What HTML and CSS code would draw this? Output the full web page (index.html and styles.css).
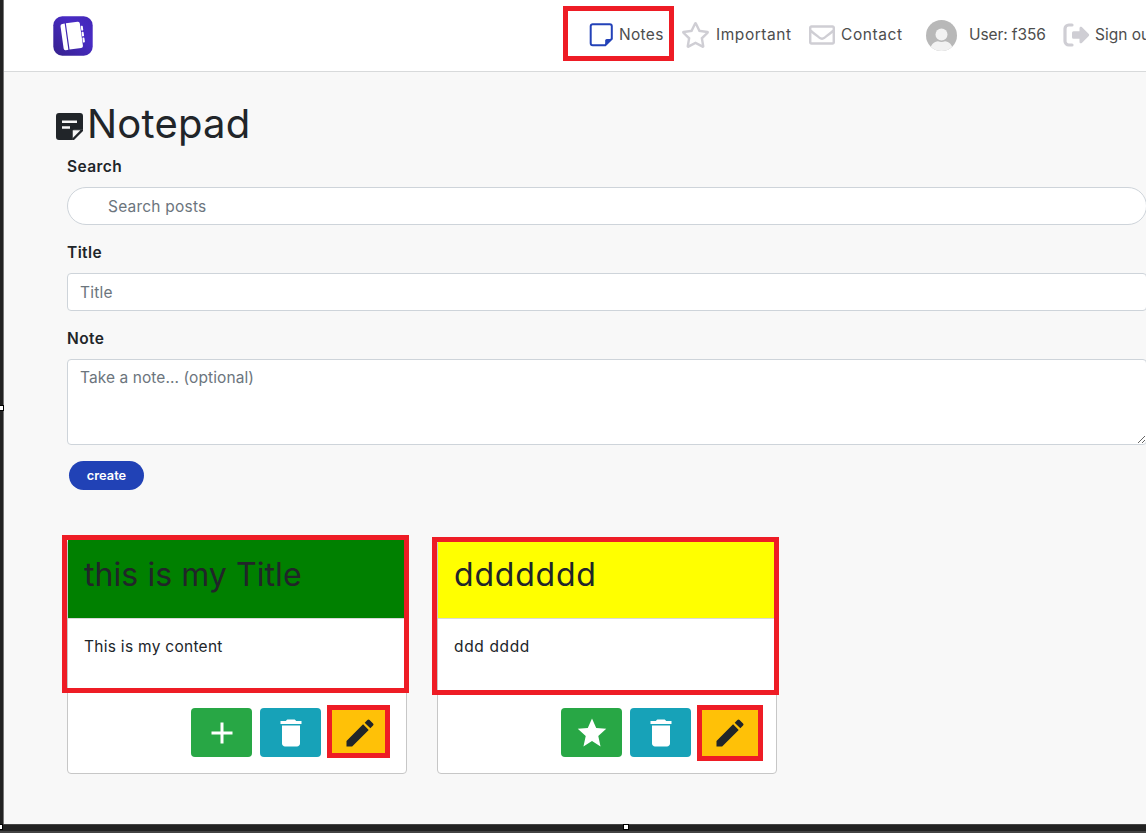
FILE: index.html
```html
<!DOCTYPE html>
<html lang="en">
<head>
<meta charset="utf-8">
<title>Notepad</title>
<link rel="stylesheet" href="styles.css">
</head>
<body>
<div class="window">
  <header class="topbar">
    <svg class="logo" viewBox="0 0 40 40">
      <defs><linearGradient id="lg" x1="0" y1="1" x2="1" y2="0"><stop offset="0" stop-color="#35218c"/><stop offset=".65" stop-color="#482bc4"/><stop offset="1" stop-color="#4327b7"/></linearGradient></defs>
      <rect x=".3" y=".3" width="39.400" height="39.400" rx="9" fill="url(#lg)"/>
      <g fill="#fff" transform="rotate(-8 20 20)">
        <path d="M11 6.500h2.500v26.500H11a2 2 0 0 1-2-2V8.500a2 2 0 0 1 2-2z"/>
        <path d="M14.700 6.500H26.500a2 2 0 0 1 2 2V31a2 2 0 0 1-2 2H14.700z"/>
        <rect x="29" y="11" width="2" height="5" rx=".8"/><rect x="29" y="17.200" width="2" height="4.600" rx=".8"/><rect x="29" y="23" width="2" height="5" rx=".8"/>
      </g>
    </svg>
    <nav class="nav">
      <a class="item notes"><svg width="24" height="24" viewBox="0 0 24 24"><path d="M3.700 1.200h17.100a2 2 0 0 1 2 2v12.600l-6.500 6.500H3.700a2 2 0 0 1-2-2V3.200a2 2 0 0 1 2-2z" fill="none" stroke="#2342b8" stroke-width="2"/><path d="M16.200 23v-5.500a1.500 1.500 0 0 1 1.500-1.500H23z" fill="#2342b8"/></svg><span class="label">Notes</span></a>
      <a class="item important"><svg width="29" height="26" viewBox="0 0 576 512"><path fill="#cfced4" d="M528.1 171.500L382 150.200 316.700 17.800c-11.700-23.600-45.600-23.900-57.400 0L194 150.200 47.900 171.500c-26.200 3.800-36.700 36.100-17.700 54.600l105.700 103-25 145.500c-4.500 26.300 23.200 46 46.400 33.700L288 439.600l130.700 68.700c23.200 12.200 50.900-7.400 46.400-33.700l-25-145.500 105.700-103c19-18.500 8.500-50.800-17.700-54.600zM388.600 312.300l23.700 138.400L288 385.400l-124.300 65.300 23.700-138.400-100.600-98 139-20.200 62.200-126 62.200 126 139 20.200-100.600 98z"/></svg><span class="label">Important</span></a>
      <a class="item contact"><svg width="26" height="26" viewBox="0 0 512 512"><path fill="#cfced4" d="M464 64H48C21.490 64 0 85.490 0 112v288c0 26.510 21.490 48 48 48h416c26.510 0 48-21.490 48-48V112c0-26.510-21.490-48-48-48zm0 48v40.805c-22.422 18.259-58.168 46.651-134.587 106.490-16.841 13.247-50.201 45.072-73.413 44.701-23.208.375-56.579-31.459-73.413-44.701C106.180 199.465 70.425 171.067 48 152.805V112h416zM48 400V214.398c22.914 18.251 55.409 43.862 104.938 82.646 21.857 17.205 60.134 55.186 103.062 54.955 42.717.231 80.509-37.199 103.053-54.947 49.528-38.783 82.032-64.401 104.947-82.653V400H48z"/></svg><span class="label">Contact</span></a>
      <a class="item user"><svg width="31" height="31" viewBox="0 0 31 31"><defs><clipPath id="av"><circle cx="15.500" cy="15.500" r="15.500"/></clipPath></defs><g clip-path="url(#av)"><path fill="#b8b8b8" d="M0 0h31v31H0z"/><circle cx="15.500" cy="14.500" r="6" fill="#f2f2f2"/><path d="M4 31c0-6 4.500-9.700 8-9.700q3.500 1.200 7 0c3.500 0 8 3.700 8 9.700z" fill="#f2f2f2"/></g></svg><span class="label">User: f356</span></a>
      <a class="item signout"><svg width="27" height="24" viewBox="0 0 27 24"><path d="M9 2H5.800A3.800 3.800 0 0 0 2 5.800v12.400A3.800 3.800 0 0 0 5.800 22H9" fill="none" stroke="#cfced4" stroke-width="3.200" stroke-linecap="round"/><path fill="#cfced4" d="M10.500 8.300h6V5.200c0-1.600 1.300-2 2.300-1.100l7 6.800q.9 1.100 0 2.200l-7 6.800c-1 .9-2.300.5-2.300-1.100v-3.100h-6a1.500 1.500 0 0 1-1.500-1.500V9.800a1.500 1.500 0 0 1 1.500-1.500z"/></svg><span class="label">Sign out</span></a>
    </nav>
  </header>
  <main class="content">
    <h1 class="heading"><svg width="27" height="27" viewBox="0 0 27 27"><path fill="#212529" d="M3 0h21a3 3 0 0 1 3 3v13.500h-9a1.500 1.500 0 0 0-1.500 1.500v9H3a3 3 0 0 1-3-3V3a3 3 0 0 1 3-3z"/><path d="M6 7.500h15v2.600H6zM6 13.200h8v2.600H6z" fill="#f8f8f8"/><path d="M16.200 16.200H27V18l-9 9h-1.800z" fill="#212529"/><path d="M16.800 17.200h7.600l-7.600 7.900z" fill="#f8f8f8"/></svg><span class="heading-text">Notepad</span></h1>
    <form class="form">
      <label class="caption">Search</label>
      <input class="field search" placeholder="Search posts">
      <label class="caption">Title</label>
      <input class="field" placeholder="Title">
      <label class="caption">Note</label>
      <textarea class="field area" placeholder="Take a note... (optional)"></textarea>
      <button class="create" type="button">create</button>
    </form>
    <section class="cards">
      <article class="card">
        <h2 class="card-title green">this is my Title</h2>
        <p class="card-text">This is my content</p>
        <div class="actions">
          <span class="btn add"><svg width="36" height="36" viewBox="0 0 24 24"><path fill="#fff" d="M19 13h-6v6h-2v-6H5v-2h6V5h2v6h6v2z"/></svg></span>
          <span class="btn del"><svg width="36" height="36" viewBox="0 0 24 24"><path fill="#fff" d="M6 19c0 1.100.9 2 2 2h8c1.100 0 2-.9 2-2V7H6v12zM19 4h-3.500l-1-1h-5l-1 1H5v2h14V4z"/></svg></span>
          <span class="btn edit"><svg width="36" height="36" viewBox="0 0 24 24"><path fill="#212529" d="M3 17.250V21h3.750L17.810 9.940l-3.750-3.750L3 17.250zM20.710 7.040a1 1 0 0 0 0-1.410l-2.340-2.340a1 1 0 0 0-1.410 0l-1.830 1.830 3.750 3.750 1.830-1.830z"/></svg></span>
        </div>
        <i class="mark mark-card"></i><i class="mark mark-edit"></i>
      </article>
      <article class="card second">
        <h2 class="card-title yellow">ddddddd</h2>
        <p class="card-text">ddd dddd</p>
        <div class="actions">
          <span class="btn add"><svg width="36" height="36" viewBox="0 0 24 24"><path fill="#fff" d="M12 17.270L17.700 21l-1.520-7.030L21.500 9.240l-6.690-.61L12 2.300 9.190 8.630 2.500 9.240l5.320 4.730L6.300 21z"/></svg></span>
          <span class="btn del"><svg width="36" height="36" viewBox="0 0 24 24"><path fill="#fff" d="M6 19c0 1.100.9 2 2 2h8c1.100 0 2-.9 2-2V7H6v12zM19 4h-3.500l-1-1h-5l-1 1H5v2h14V4z"/></svg></span>
          <span class="btn edit"><svg width="36" height="36" viewBox="0 0 24 24"><path fill="#212529" d="M3 17.250V21h3.750L17.810 9.940l-3.750-3.750L3 17.250zM20.710 7.040a1 1 0 0 0 0-1.410l-2.340-2.340a1 1 0 0 0-1.410 0l-1.830 1.830 3.750 3.750 1.830-1.830z"/></svg></span>
        </div>
        <i class="mark mark-card"></i><i class="mark mark-edit"></i>
      </article>
    </section>
  </main>
  <footer class="edge"></footer>
  <i class="mark mark-nav"></i>
  <i class="handle handle-left"></i><i class="handle handle-bottom"></i><i class="handle handle-corner"></i>
</div>
</body>
</html>
```
FILE: styles.css
```css
* { box-sizing: border-box; }
body { margin: 0; overflow: hidden; background: #f8f8f8; color: #212529; font: 400 16px/24px Inter, sans-serif; }
svg { display: block; flex: none; }
.window { position: relative; width: 1146px; height: 833px; overflow: hidden; display: flex; flex-direction: column; background: linear-gradient(90deg, #222 3px, #777 3px, #777 4px, #f8f8f8 4px); }
.topbar { height: 72px; flex: none; margin-left: 4px; padding: 1px 0 0 49px; display: flex; align-items: center; background: #fff; border-bottom: 1px solid #d8dadb; }
.logo { width: 40px; height: 40px; }
.nav { display: flex; align-items: center; margin-left: 496px; height: 70px; padding-bottom: 2px; color: #4d4d4d; }
.item { display: flex; align-items: center; flex: none; white-space: nowrap; }
.label { display: block; font-size: 15.5px; }
.notes { width: 92px; gap: 6px; }
.notes .label { letter-spacing: .3px; }
.important { width: 128px; gap: 6px; }
.important .label { letter-spacing: .55px; }
.contact { width: 117px; gap: 6px; }
.contact .label { letter-spacing: .6px; }
.user { width: 137px; gap: 12px; }
.user .label { letter-spacing: -.1px; }
.signout { gap: 5px; }
.content { flex: 1; margin-left: 4px; padding: 28px 0 0 52px; }
.heading { margin: 0; height: 48px; display: flex; align-items: center; gap: 4px; font-size: 40px; line-height: 48px; font-weight: 400; }
.heading svg { margin-top: 5px; }
.heading-text { display: block; letter-spacing: .2px; }
.form { width: 1080px; margin: 7px 0 0 11px; display: flex; flex-direction: column; align-items: flex-start; }
.caption { font-weight: 600; font-size: 15.5px; line-height: 24px; margin-bottom: 8px; letter-spacing: .4px; }
.field { width: 1080px; height: 38px; margin: 0 0 16px; padding: 6px 12px; border: 1px solid #ced4da; border-radius: 4px; background: #fff; color: #495057; font: 400 15.5px/24px Inter, sans-serif; letter-spacing: .22px; }
.field::placeholder { color: #6c757d; opacity: 1; }
.search { border-radius: 19px; padding-left: 40px; }
.area { height: 86px; padding-top: 6px; resize: both; letter-spacing: .08px; }
.create { width: 75px; height: 29px; margin-left: 2px; padding: 0; border: 0; border-radius: 15px; background: #2142b6; color: #fff; font: 600 12.800px/29px Inter, sans-serif; }
.cards { display: grid; grid-template-columns: 340px 340px; gap: 30px; margin: 49px 0 0 11px; }
.card { position: relative; height: 235px; display: flex; flex-direction: column; background: #fff; border: 1px solid #c7c7c7; border-radius: 4px; }
.card-title { margin: 0; height: 79px; padding: 16px; font-size: 32px; line-height: 38px; font-weight: 400; border-bottom: 1px solid #d9d9d9; letter-spacing: .07px; }
.green { background: #008000; }
.yellow { background: #ff0; letter-spacing: .8px; }
.card-text { margin: 0; padding: 16px; flex: 1; font-size: 15.5px; letter-spacing: .28px; }
.second .card-text { letter-spacing: .65px; }
.actions { display: flex; justify-content: flex-end; gap: 8px; padding: 0 16px 16px; }
.btn { width: 61px; height: 49px; display: flex; align-items: center; justify-content: center; border-radius: 4px; }
.add { background: #28a745; }
.del { background: #17a2b8; }
.edit { background: #ffc107; }
.mark { position: absolute; border: 5px solid #ee1c25; }
.mark-nav { left: 563px; top: 6px; width: 111px; height: 55px; }
.mark-card { left: -6px; top: -5px; width: 347px; height: 158px; }
.mark-edit { left: 259px; top: 165px; width: 63px; height: 53px; }
.second .mark-card { top: -3px; }
.second .mark-edit { width: 66px; height: 56px; }
.edge { flex: none; height: 9px; background: #222; border-top: 1px solid #444; border-bottom: 2px solid #434343; }
.handle { position: absolute; width: 6px; height: 6px; background: #fff; border: 1px solid #000; }
.handle-left { left: -2px; top: 405px; }
.handle-bottom { left: 623px; top: 824px; }
.handle-corner { left: -3px; top: 824px; }
```
